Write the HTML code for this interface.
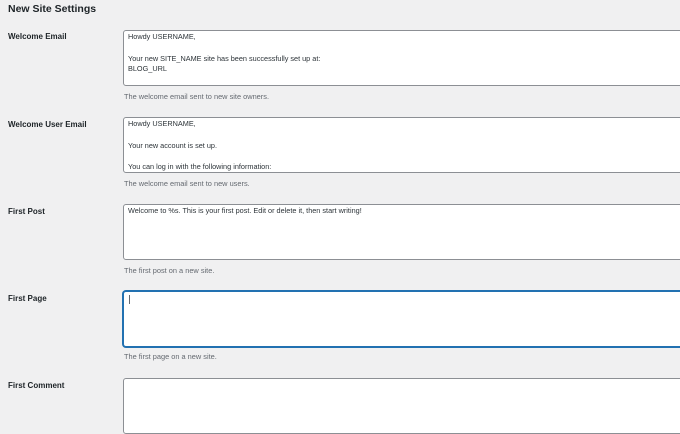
<!DOCTYPE html>
<html><head><style>
body{margin:0;background:#f0f0f1;font-family:"Liberation Sans",Arial,sans-serif;color:#1d2327;width:680px;height:405px;overflow:hidden;position:relative}
.t{position:absolute;left:8px;top:3px;font-size:10.5px;font-weight:bold}
.l{position:absolute;left:8px;font-size:8px;font-weight:bold}
.b{position:absolute;left:123px;width:570px;height:54px;background:#fff;border:1px solid #8c8f94;border-radius:3px;box-sizing:border-box;padding:1px 4px;font-size:7.3px;line-height:10.8px;color:#2c3338;white-space:pre;overflow:hidden}
.f{border:1.5px solid #2271b1;box-shadow:0 0 0 1px #2271b1}
.d{position:absolute;left:124px;font-size:7.4px;color:#646970}
</style></head><body>
<div class="t">New Site Settings</div>
<div class="l" style="top:32px">Welcome Email</div>
<div class="b" style="top:30px;height:56px">Howdy USERNAME,

Your new SITE_NAME site has been successfully set up at:
BLOG_URL</div>
<div class="d" style="top:92px">The welcome email sent to new site owners.</div>
<div class="l" style="top:120px">Welcome User Email</div>
<div class="b" style="top:117px;height:56px">Howdy USERNAME,

Your new account is set up.

You can log in with the following information:</div>
<div class="d" style="top:179px">The welcome email sent to new users.</div>
<div class="l" style="top:207px">First Post</div>
<div class="b" style="top:204px;height:56px">Welcome to %s. This is your first post. Edit or delete it, then start writing!</div>
<div class="d" style="top:266px">The first post on a new site.</div>
<div class="l" style="top:294px">First Page</div>
<div class="b f" style="top:291px;height:56px"><span style="display:inline-block;width:1px;height:9px;background:#646970;margin-left:1px;margin-top:2px"></span></div>
<div class="d" style="top:352px">The first page on a new site.</div>
<div class="l" style="top:381px">First Comment</div>
<div class="b" style="top:378px;height:56px"></div>
</body></html>
